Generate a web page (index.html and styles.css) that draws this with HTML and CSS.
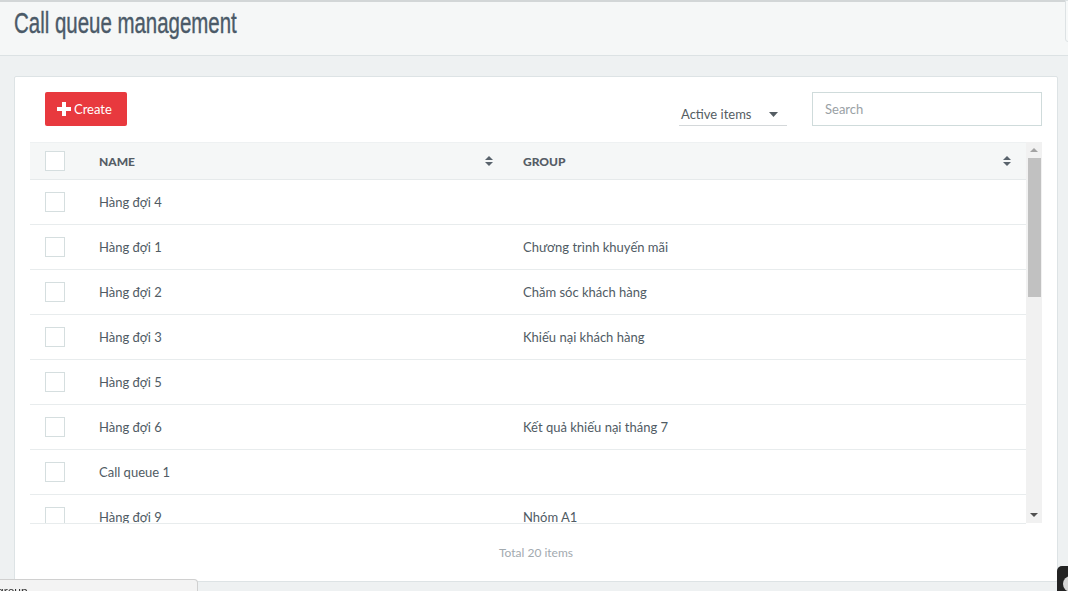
FILE: index.html
```html
<!DOCTYPE html>
<html lang="vi">
<head>
  <meta charset="UTF-8">
  <meta name="viewport" content="width=device-width, initial-scale=1.0">
  <title>Call queue management</title>
  <link rel="stylesheet" href="styles.css">
</head>
<body>
  <header class="page-header">
    <h1>Call queue management</h1>
    <div class="header-tools"></div>
  </header>

  <main class="content">
    <section class="card">
      <div class="toolbar">
        <button class="btn-create">
          <svg class="plus" width="14" height="14" viewBox="0 0 14 14"><path d="M5 0h4v5h5v4H9v5H5V9H0V5h5z" fill="#fff"/></svg>
          Create
        </button>
        <div class="toolbar-right">
          <div class="filter-select">
            <span>Active items</span>
            <svg class="caret" width="9" height="5" viewBox="0 0 9 5"><path d="M0 0h9L4.5 5z" fill="#555d63"/></svg>
          </div>
          <input class="search" type="text" placeholder="Search">
        </div>
      </div>

      <div class="table-wrap">
        <div class="table-view">
          <table class="grid">
            <thead>
              <tr>
                <th class="col-check"><span class="checkbox"></span></th>
                <th class="col-name">
                  <div class="th-inner">NAME <svg class="sort" width="8" height="10" viewBox="0 0 8 10"><path d="M0 4L4 0l4 4zM0 6h8l-4 4z" fill="#59636c"/></svg></div>
                </th>
                <th class="col-group">
                  <div class="th-inner">GROUP <svg class="sort" width="8" height="10" viewBox="0 0 8 10"><path d="M0 4L4 0l4 4zM0 6h8l-4 4z" fill="#59636c"/></svg></div>
                </th>
              </tr>
            </thead>
            <tbody id="rows"></tbody>
          </table>
        </div>
        <!-- scrollbar drawn by hand, headless browser hides the native one -->
        <div class="scrollbar">
          <div class="sb-btn">
            <svg width="8" height="4" viewBox="0 0 8 4"><path d="M0 4L4 0l4 4z" fill="#a3a3a3"/></svg>
          </div>
          <div class="sb-track"><div class="sb-thumb"></div></div>
          <div class="sb-btn">
            <svg width="8" height="4" viewBox="0 0 8 4"><path d="M0 0h8L4 4z" fill="#505050"/></svg>
          </div>
        </div>
      </div>

      <div class="table-footer">Total 20 items</div>
    </section>
  </main>

  <div class="status-bubble">group</div>
  <div class="chat-widget"><span></span></div>

  <script>
  const queues = [
    ['Hàng đợi 4', ''],
    ['Hàng đợi 1', 'Chương trình khuyến mãi'],
    ['Hàng đợi 2', 'Chăm sóc khách hàng'],
    ['Hàng đợi 3', 'Khiếu nại khách hàng'],
    ['Hàng đợi 5', ''],
    ['Hàng đợi 6', 'Kết quả khiếu nại tháng 7'],
    ['Call queue 1', ''],
    ['Hàng đợi 9', 'Nhóm A1'],
    ['Hàng đợi 7', ''],
    ['Hàng đợi 8', 'Nhóm A2'],
    ['Hàng đợi 10', ''],
    ['Hàng đợi 11', 'Chăm sóc khách hàng'],
    ['Hàng đợi 12', ''],
    ['Call queue 2', ''],
    ['Hàng đợi 13', 'Nhóm B1'],
    ['Hàng đợi 14', ''],
    ['Hàng đợi 15', ''],
    ['Call queue 3', 'Nhóm B2'],
    ['Hàng đợi 16', ''],
    ['Hàng đợi 17', '']
  ];

  const rowsElem = document.getElementById('rows');

  queues.forEach(item => {
    const tr = document.createElement('tr');
    tr.innerHTML = `
      <td class="col-check"><span class="checkbox"></span></td>
      <td class="col-name">${item[0]}</td>
      <td class="col-group">${item[1]}</td>
    `;
    rowsElem.appendChild(tr);
  });
  </script>
</body>
</html>
```

FILE: styles.css
```css
html, body {
  margin: 0;
  height: 100%;
  overflow: hidden;
}

body {
  font-family: Lato, "Noto Sans", sans-serif;
  font-size: 13px;
  color: #505b64;
  background-color: #eef1f2;
}

.page-header {
  display: flex;
  align-items: flex-start;
  height: 53px;
  border-top: 2px solid #d2d6d7;
  border-bottom: 1px solid #dce2e4;
  background-color: #f5f7f7;
}

.page-header h1 {
  margin: 4px 0 0 14px;
  font-family: "Liberation Sans", Arial, sans-serif;
  font-weight: normal;
  font-size: 29px;
  line-height: 34px;
  color: #4b5a68;
  white-space: nowrap;
  transform: scaleX(0.705);
  transform-origin: left center;
  -webkit-text-stroke: 0.4px #4b5a68;
  flex: 1;
}

.header-tools {
  width: 10px;
  height: 40px;
  margin-top: -2px;
  margin-right: -9px;
  background-color: #f7f9f9;
  border: 1px solid #dde2e4;
  border-radius: 0 0 0 3px;
}

.content {
  padding: 20px 10px 0 14px;
}

.card {
  background-color: #fff;
  border: 1px solid #dde3e5;
  border-radius: 2px;
  padding: 15px 15px 0 15px;
  height: 489px;
}

.toolbar {
  display: flex;
  justify-content: space-between;
  height: 34px;
}

.btn-create {
  display: flex;
  align-items: center;
  gap: 3px;
  margin-left: 15px;
  width: 82px;
  height: 34px;
  padding: 0 0 0 12px;
  border: none;
  border-radius: 2px;
  background-color: #e8393e;
  color: #fff;
  font-family: Lato, "Noto Sans", sans-serif;
  font-size: 13px;
}

.toolbar-right {
  display: flex;
  gap: 25px;
}

.filter-select {
  display: flex;
  align-items: center;
  justify-content: space-between;
  width: 108px;
  height: 33px;
  margin-top: 1px;
  padding: 10px 9px 0 2px;
  box-sizing: border-box;
  border-bottom: 1px solid #d4d8da;
  color: #555d63;
}

.search {
  width: 230px;
  height: 34px;
  box-sizing: border-box;
  padding: 0 12px;
  border: 1px solid #cfdbdb;
  font-family: Lato, "Noto Sans", sans-serif;
  font-size: 13px;
  outline: none;
}

.search::placeholder {
  color: #9aa1a5;
}

.table-wrap {
  display: flex;
  margin-top: 16px;
  height: 382px;
}

.table-view {
  flex: 1;
  overflow: hidden;
  border-bottom: 1px solid #e8eced;
}

.scrollbar {
  display: flex;
  flex-direction: column;
  width: 16px;
  height: 381px;
  background-color: #f1f1f1;
}

.sb-btn {
  height: 16px;
  display: flex;
  align-items: center;
  justify-content: center;
}

.sb-track {
  flex: 1;
  padding: 0 1px 0 2px;
}

.sb-thumb {
  height: 139px;
  background-color: #c1c1c1;
}

.grid {
  width: 100%;
  border-collapse: collapse;
  table-layout: fixed;
}

.grid thead th {
  height: 36px;
  padding: 0 15px;
  background-color: #f5f7f7;
  border-top: 1px solid #eef1f2;
  border-bottom: 1px solid #e6eaeb;
  text-align: left;
  font-size: 12px;
  font-weight: 900;
  color: #555d66;
}

.th-inner {
  display: flex;
  align-items: center;
  justify-content: space-between;
}

.grid td {
  height: 44px;
  padding: 0 15px;
  border-bottom: 1px solid #e8eced;
  white-space: nowrap;
}

.col-check {
  width: 24px;
}

.grid .col-name {
  width: 394px;
}

.checkbox {
  display: block;
  width: 18px;
  height: 18px;
  border: 1px solid #d5dedf;
  background-color: #fff;
}

.table-footer {
  height: 57px;
  display: flex;
  align-items: center;
  justify-content: center;
  font-size: 12px;
  color: #a2aaaf;
}

.status-bubble {
  position: fixed;
  left: 0;
  top: 579px;
  width: 197px;
  height: 20px;
  padding-top: 4px;
  text-indent: -3px;
  background-color: #f3f3f3;
  border: 1px solid #d0d0d0;
  border-left: none;
  border-radius: 0 4px 0 0;
  font-family: "Liberation Sans", sans-serif;
  font-size: 12px;
  line-height: 16px;
  color: #333;
}

.chat-widget {
  position: fixed;
  left: 1057px;
  top: 566px;
  width: 30px;
  height: 36px;
  background-color: #232323;
  border-radius: 5px;
}

.chat-widget span {
  position: absolute;
  left: 6px;
  top: 10px;
  width: 16px;
  height: 16px;
  border-radius: 50%;
  background-color: #d6d6d6;
}
```
